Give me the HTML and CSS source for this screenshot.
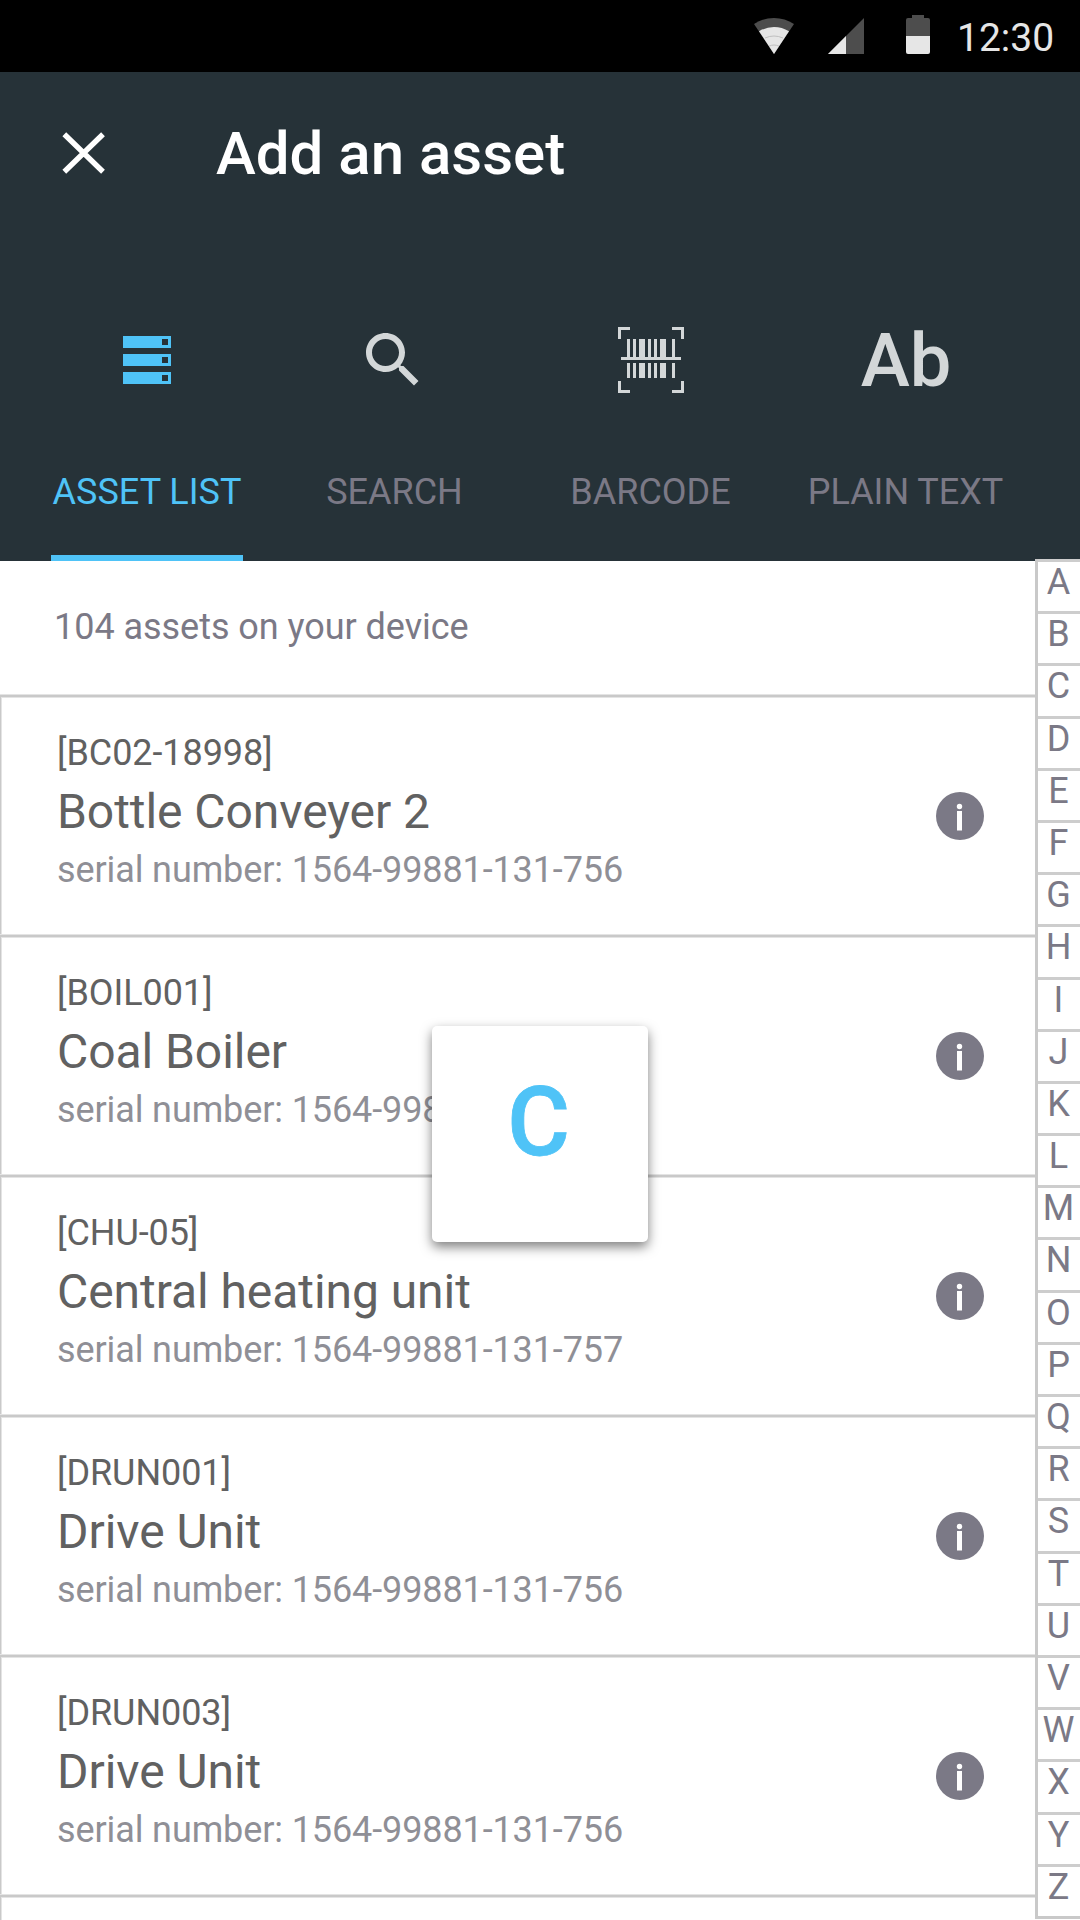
FILE: index.html
```html
<!DOCTYPE html>
<html lang="en">
<head>
<meta charset="utf-8">
<title>Add an asset</title>
<link rel="stylesheet" href="styles.css">
</head>
<body>
<svg class="defs" aria-hidden="true">
  <symbol id="info" viewBox="0 0 48 48">
    <circle cx="24" cy="24" r="24" fill="#7b7986"/>
    <circle cx="23.5" cy="14.5" r="2.7" fill="#fff"/>
    <rect x="21" y="19" width="5" height="19.5" fill="#fff"/>
  </symbol>
</svg>
<div class="status">
  <svg class="wifi" width="40" height="36" viewBox="0 0 40 36">
    <path d="M0 6Q9 0 20 0T40 6L20 36Z" fill="#4d4d4d"/>
    <path d="M5 13.3Q12 9 20 9T35 13.3L20 36Z" fill="#e6e6e6"/>
    <path d="M11 20Q15.500 18 20 18T29 20M15 28.200Q17.500 27 20 27T25 28.200" fill="none" stroke="#b5b5b5" stroke-width=".8"/>
  </svg>
  <svg class="signal" width="36" height="36" viewBox="0 0 36 36">
    <path d="M0 36L36 0V36Z" fill="#4d4d4d"/>
    <path d="M0 36L18 18V36Z" fill="#e6e6e6"/>
  </svg>
  <svg class="battery" width="24" height="39" viewBox="0 0 24 39">
    <path d="M6 0H18V3H22Q24 3 24 5V21H0V5Q0 3 2 3H6Z" fill="#4d4d4d"/>
    <path d="M0 21H24V37Q24 39 22 39H2Q0 39 0 37Z" fill="#e6e6e6"/>
  </svg>
  <span class="clock">12:30</span>
</div>
<header class="header">
  <div class="bar">
    <svg class="close" width="48" height="48" viewBox="0 0 48 48"><path d="M4.300 5.300L43 42.700M43 5.300L4.300 42.700" stroke="#fff" stroke-width="5.400"/></svg>
    <h1 class="title">Add an asset</h1>
  </div>
  <nav class="tabs">
    <div class="tab active">
      <div class="icon"><svg width="48" height="48" viewBox="0 0 48 48"><path fill="#4fc3f7" fill-rule="evenodd" d="M0 0H48V12H0ZM39 3V9H45V3ZM0 18H48V30H0ZM39 21V27H45V21ZM0 36H48V48H0ZM39 39V45H45V39Z"/></svg></div>
      <span class="label">ASSET LIST</span>
    </div>
    <div class="tab">
      <div class="icon search"><svg width="72" height="72" viewBox="0 0 24 24"><path fill="#d3d7d8" d="M15.500 14h-.79l-.28-.27C15.410 12.590 16 11.110 16 9.500 16 5.910 13.090 3 9.500 3S3 5.910 3 9.500 5.910 16 9.500 16c1.610 0 3.090-.59 4.230-1.570l.27.28v.79l5 4.990L20.490 19l-4.990-5zm-6 0C7.010 14 5 11.990 5 9.500S7.010 5 9.500 5 14 7.010 14 9.500 11.990 14 9.500 14z"/></svg></div>
      <span class="label">SEARCH</span>
    </div>
    <div class="tab">
      <div class="icon barcode"><svg width="72" height="72" viewBox="0 0 72 72"><path fill="#d3d7d8" d="M3 3H15V6H6V15H3ZM57 3H69V15H66V6H57ZM3 57H6V66H15V69H3ZM66 57H69V69H57V66H66ZM6 33H66V36H6ZM12 15h3v18h-3ZM18 15h3v18h-3ZM24 15h6v18h-6ZM33 15h3v18h-3ZM39 15h3v18h-3ZM45 15h6v18h-6ZM57 15h3v18h-3ZM12 39h3v15h-3ZM18 39h3v15h-3ZM24 39h6v15h-6ZM33 39h3v15h-3ZM39 39h3v15h-3ZM45 39h6v15h-6ZM57 39h3v15h-3Z"/></svg></div>
      <span class="label">BARCODE</span>
    </div>
    <div class="tab">
      <div class="icon glyph">Ab</div>
      <span class="label">PLAIN TEXT</span>
    </div>
  </nav>
</header>
<div class="content">
  <main class="list">
    <p class="count">104 assets on your device</p>
    <article class="row"><div class="text"><p class="code">[BC02-18998]</p><h2 class="name">Bottle Conveyer 2</h2><p class="serial">serial number: 1564-99881-131-756</p></div><svg class="info"><use href="#info"/></svg></article>
    <article class="row"><div class="text"><p class="code">[BOIL001]</p><h2 class="name">Coal Boiler</h2><p class="serial">serial number: 1564-99881-131-756</p></div><svg class="info"><use href="#info"/></svg></article>
    <article class="row"><div class="text"><p class="code">[CHU-05]</p><h2 class="name">Central heating unit</h2><p class="serial">serial number: 1564-99881-131-757</p></div><svg class="info"><use href="#info"/></svg></article>
    <article class="row"><div class="text"><p class="code">[DRUN001]</p><h2 class="name">Drive Unit</h2><p class="serial">serial number: 1564-99881-131-756</p></div><svg class="info"><use href="#info"/></svg></article>
    <article class="row"><div class="text"><p class="code">[DRUN003]</p><h2 class="name">Drive Unit</h2><p class="serial">serial number: 1564-99881-131-756</p></div><svg class="info"><use href="#info"/></svg></article>
    <div class="end"></div>
  </main>
  <aside class="index">
    <span>A</span><span>B</span><span>C</span><span>D</span><span>E</span><span>F</span><span>G</span><span>H</span><span>I</span><span>J</span><span>K</span><span>L</span><span>M</span><span>N</span><span>O</span><span>P</span><span>Q</span><span>R</span><span>S</span><span>T</span><span>U</span><span>V</span><span>W</span><span>X</span><span>Y</span><span>Z</span>
  </aside>
</div>
<div class="popup">C</div>
</body>
</html>
```
FILE: styles.css
```css
* { box-sizing: border-box; margin: 0; padding: 0; }

body {
  position: relative;
  width: 1080px;
  height: 1920px;
  overflow: hidden;
  background: #fff;
  font-family: Roboto, sans-serif;
  font-size: 36px;
  font-weight: 400;
  color: #7b7986;
  white-space: nowrap;
}

svg { display: block; flex: none; }
.defs { display: none; }

/* Status bar */
.status {
  display: flex;
  height: 72px;
  padding-left: 754px;
  background: #000;
}
.wifi { margin-top: 18px; }
.signal { margin: 18px 0 0 34px; }
.battery { margin: 15px 0 0 42px; }
.clock {
  margin-left: 27px;
  color: #e6e6e6;
  font-size: 39px;
  line-height: 76px;
}

/* Header */
.header {
  display: flex;
  flex-direction: column;
  height: 489px;
  background: #263238;
}
.bar {
  display: flex;
  align-items: center;
  height: 162px;
  padding-left: 60px;
}
.title {
  margin-left: 108px;
  padding-top: 1px;
  color: #fff;
  font-size: 60px;
  font-weight: 500;
  line-height: 73px;
}
.tabs {
  display: grid;
  grid-template-columns: 240px 254px 258px 252px;
  flex: 1;
  padding-left: 27px;
}
.tab {
  display: flex;
  flex-direction: column;
  align-items: center;
  padding-top: 90px;
}
.icon {
  display: flex;
  align-items: center;
  justify-content: center;
  height: 72px;
}
.search { padding-right: 2px; }
.barcode { padding-left: 2px; }
.glyph {
  padding-left: 2px;
  color: #d3d7d8;
  font-size: 74px;
  font-weight: 500;
}
.label {
  display: flex;
  align-items: flex-start;
  justify-content: center;
  width: 192px;
  height: 165px;
  padding: 75px 0 0 1px;
  line-height: 42px;
}
.active .label {
  padding-left: 0;
  color: #4fc3f7;
  border-bottom: 6px solid #4fc3f7;
}

/* Asset list */
.content { display: flex; height: 1359px; }
.list {
  display: flex;
  flex-direction: column;
  width: 1035px;
}
.count {
  height: 134px;
  padding: 45px 0 0 54px;
  line-height: 42px;
  letter-spacing: -.04px;
}
.row {
  display: flex;
  justify-content: space-between;
  height: 240px;
  padding: 34px 51px 0 56px;
}
.row, .end {
  border-top: 2px solid #c9c9c9;
  border-left: 1px solid #c9c9c9;
  box-shadow: 0 -1px #e4e4e4, inset 1px 1px #e4e4e4;
}
.end { flex: 1; }
.code {
  color: #616161;
  line-height: 44px;
  letter-spacing: -.08px;
}
.name {
  margin-top: 7px;
  color: #616161;
  font-size: 48px;
  font-weight: 400;
  line-height: 60px;
  letter-spacing: -.06px;
}
.serial {
  margin-top: 6px;
  color: #8f8f96;
  line-height: 44px;
  letter-spacing: -.11px;
}
.info { width: 48px; height: 48px; margin-top: 61px; }

/* Alphabet index */
.index {
  display: flex;
  flex-direction: column;
  width: 45px;
  height: 1360px;
  margin-top: -2px;
  border-left: 3px solid #c9c9c9;
  border-bottom: 3px solid #c9c9c9;
  background: #fff;
}
.index span {
  flex: 1;
  padding-right: 1px;
  border-top: 3px solid #cdcdcd;
  line-height: 41px;
  text-align: center;
}

/* Current letter */
.popup {
  position: absolute;
  left: 432px;
  top: 1026px;
  width: 216px;
  height: 216px;
  padding-right: 3px;
  border-radius: 5px;
  background: #fff;
  color: #4fc3f7;
  font-size: 96px;
  font-weight: 500;
  line-height: 192px;
  text-align: center;
  -webkit-text-stroke: .8px #4fc3f7;
  box-shadow: 0 5px 12px rgba(0, 0, 0, .5);
}
```
